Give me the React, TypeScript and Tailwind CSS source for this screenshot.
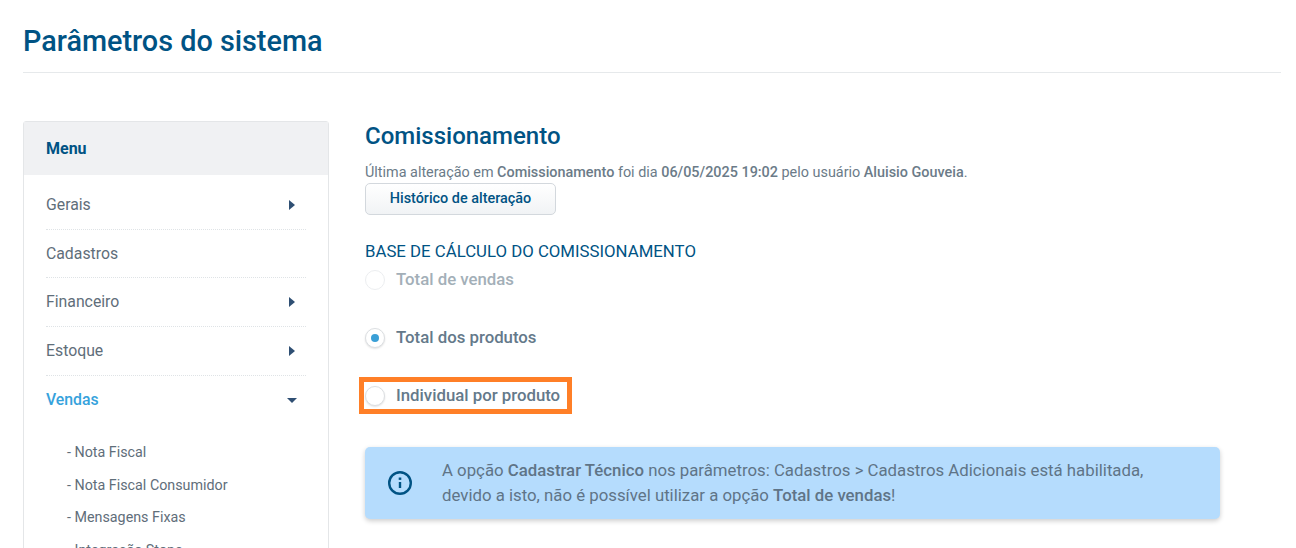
const titleColor = 'text-[#005384]'

function Caret({ open = false }: { open?: boolean }) {
  return (
    <svg width="10" height="10" viewBox="0 0 10 10" className="fill-[#2f4f73]">
      {open ? <path d="M0 3h10L5 8z" /> : <path d="M2 0v10L8 5z" />}
    </svg>
  )
}

function MenuRow({ label, caret = false }: { label: string; caret?: boolean }) {
  return (
    <div className="flex h-[48.7px] items-center justify-between border-b border-dotted border-[#dfe3e6] pr-[9px] text-[15.8px] text-[#5f6e7a]">
      <span>{label}</span>
      {caret && <Caret />}
    </div>
  )
}

function Radio({ checked = false, disabled = false }: { checked?: boolean; disabled?: boolean }) {
  return (
    <span
      className={`flex h-5 w-5 items-center justify-center rounded-full border bg-white ${
        disabled ? 'border-[#eceef0]' : 'border-[#dcdfe2] shadow-[0_1px_2px_rgba(0,0,0,0.12)]'
      }`}
    >
      {checked && <span className="h-2 w-2 rounded-full bg-[#3a9fd6]" />}
    </span>
  )
}

export default function App() {
  return (
    <div className="h-[548px] overflow-hidden bg-white pl-[23px] pr-[15px] font-['Roboto',sans-serif]">
      <header className="h-[73px] border-b border-[#e6e9eb] pt-[22px]">
        <h1 className={`text-[28.8px] font-medium leading-[38px] ${titleColor}`}>Parâmetros do sistema</h1>
      </header>

      <div className="mt-[48px] flex">
        <aside className="h-[500px] w-[306px] shrink-0 rounded-t-[3px] border border-[#e4e6e8]">
          <div className={`flex h-[53px] items-center bg-[#f0f1f3] pl-[22px] text-[16px] font-bold ${titleColor}`}>
            Menu
          </div>
          <nav className="px-[22px] pt-[6px]">
            <MenuRow label="Gerais" caret />
            <MenuRow label="Cadastros" />
            <MenuRow label="Financeiro" caret />
            <MenuRow label="Estoque" caret />
            <div className="flex h-[49px] items-center justify-between pr-[9px] text-[15.8px] font-medium text-[#36a2dc]">
              <span>Vendas</span>
              <Caret open />
            </div>
            <ul className="mt-[11.5px] pl-[21px] text-[14.3px] leading-[32.5px] text-[#5f6e7a]">
              <li>- Nota Fiscal</li>
              <li>- Nota Fiscal Consumidor</li>
              <li>- Mensagens Fixas</li>
              <li>- Integração Stone</li>
            </ul>
          </nav>
        </aside>

        <main className="ml-[36px] w-[855px]">
          <h2 className={`text-[24px] font-medium leading-[30px] ${titleColor}`}>Comissionamento</h2>
          <p className="mt-[13px] text-[14.4px] leading-[17px] text-[#6b7b88]">
            Última alteração em <b className="font-medium">Comissionamento</b> foi dia{' '}
            <b className="font-medium">06/05/2025 19:02</b> pelo usuário <b className="font-medium">Aluisio Gouveia</b>.
          </p>
          <button className={`mt-[2px] block h-[32px] w-[191px] rounded-[5px] border border-[#d3d8dd] bg-gradient-to-b from-white to-[#f1f3f5] text-[14.4px] font-medium ${titleColor}`}>
            Histórico de alteração
          </button>
          <h3 className={`mt-[26px] text-[16.8px] leading-[20px] ${titleColor}`}>BASE DE CÁLCULO DO COMISSIONAMENTO</h3>

          <div className="mt-[9px] flex h-5 items-center gap-[11px] text-[16.8px] font-medium text-[#a3afb8]">
            <Radio disabled />
            <span>Total de vendas</span>
          </div>
          <div className="mt-[38px] flex h-5 items-center gap-[11px] text-[16.8px] font-medium text-[#64798a]">
            <Radio checked />
            <span>Total dos produtos</span>
          </div>
          <div className="mt-[29px] ml-[-6px] flex h-[37px] w-[213px] items-center gap-[11px] border-[5px] border-[#ff7f27] pl-px text-[16.8px] font-medium text-[#64798a]">
            <Radio />
            <span>Individual por produto</span>
          </div>

          <div className="mt-[33px] flex h-[72px] items-center rounded-[5px] bg-[#b5dcfd] pl-[22px] shadow-[0_2px_5px_rgba(0,0,0,0.2)]">
            <svg width="26" height="26" viewBox="0 0 26 26" fill="none" className="shrink-0 stroke-[#005384]">
              <circle cx="13" cy="13" r="10.8" strokeWidth="2.4" />
              <path d="M13 12v6" strokeWidth="2.4" />
              <path d="M13 7.5v2.4" strokeWidth="2.6" />
            </svg>
            <p className="ml-[29px] text-[16.8px] leading-[25px] text-[#5f7487]">
              A opção <b className="font-medium">Cadastrar Técnico</b> nos parâmetros: Cadastros &gt; Cadastros Adicionais está habilitada,
              <br />
              devido a isto, não é possível utilizar a opção <b className="font-medium">Total de vendas</b>!
            </p>
          </div>
        </main>
      </div>
    </div>
  )
}
